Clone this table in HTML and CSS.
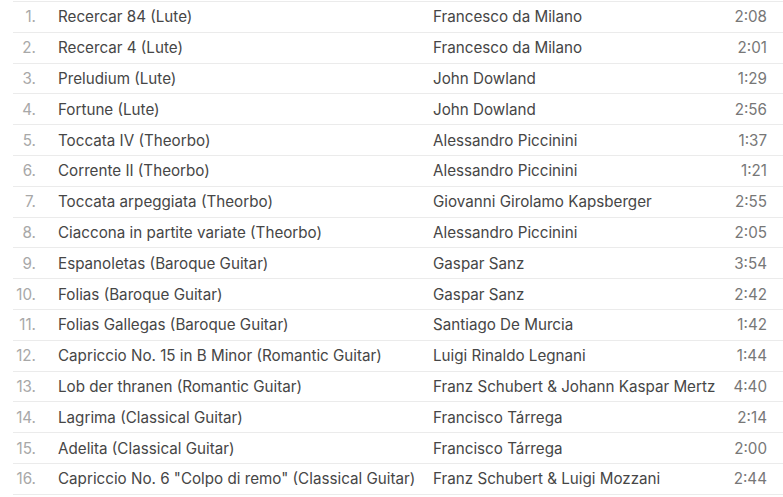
FILE: index.html
```html
<!DOCTYPE html>
<html>
<head>
<meta charset="utf-8">
<link rel="stylesheet" href="styles.css">
</head>
<body>
<ol class="tracks">
<li class="row"><span class="num">1.</span><span class="title">Recercar 84 (Lute)</span><span class="artist">Francesco da Milano</span><span class="time">2:08</span></li>
<li class="row"><span class="num">2.</span><span class="title">Recercar 4 (Lute)</span><span class="artist">Francesco da Milano</span><span class="time">2:01</span></li>
<li class="row"><span class="num">3.</span><span class="title">Preludium (Lute)</span><span class="artist">John Dowland</span><span class="time">1:29</span></li>
<li class="row"><span class="num">4.</span><span class="title">Fortune (Lute)</span><span class="artist">John Dowland</span><span class="time">2:56</span></li>
<li class="row"><span class="num">5.</span><span class="title">Toccata IV (Theorbo)</span><span class="artist">Alessandro Piccinini</span><span class="time">1:37</span></li>
<li class="row"><span class="num">6.</span><span class="title">Corrente II (Theorbo)</span><span class="artist">Alessandro Piccinini</span><span class="time">1:21</span></li>
<li class="row"><span class="num">7.</span><span class="title">Toccata arpeggiata (Theorbo)</span><span class="artist">Giovanni Girolamo Kapsberger</span><span class="time">2:55</span></li>
<li class="row"><span class="num">8.</span><span class="title">Ciaccona in partite variate (Theorbo)</span><span class="artist">Alessandro Piccinini</span><span class="time">2:05</span></li>
<li class="row"><span class="num">9.</span><span class="title">Espanoletas (Baroque Guitar)</span><span class="artist">Gaspar Sanz</span><span class="time">3:54</span></li>
<li class="row"><span class="num">10.</span><span class="title">Folias (Baroque Guitar)</span><span class="artist">Gaspar Sanz</span><span class="time">2:42</span></li>
<li class="row"><span class="num">11.</span><span class="title">Folias Gallegas (Baroque Guitar)</span><span class="artist">Santiago De Murcia</span><span class="time">1:42</span></li>
<li class="row"><span class="num">12.</span><span class="title">Capriccio No. 15 in B Minor (Romantic Guitar)</span><span class="artist">Luigi Rinaldo Legnani</span><span class="time">1:44</span></li>
<li class="row"><span class="num">13.</span><span class="title">Lob der thranen (Romantic Guitar)</span><span class="artist">Franz Schubert &amp; Johann Kaspar Mertz</span><span class="time">4:40</span></li>
<li class="row"><span class="num">14.</span><span class="title">Lagrima (Classical Guitar)</span><span class="artist">Francisco Tárrega</span><span class="time">2:14</span></li>
<li class="row"><span class="num">15.</span><span class="title">Adelita (Classical Guitar)</span><span class="artist">Francisco Tárrega</span><span class="time">2:00</span></li>
<li class="row"><span class="num">16.</span><span class="title">Capriccio No. 6 "Colpo di remo" (Classical Guitar)</span><span class="artist">Franz Schubert &amp; Luigi Mozzani</span><span class="time">2:44</span></li>
</ol>
</body>
</html>
```
FILE: styles.css
```css
html, body {
  margin: 0;
  padding: 0;
  background: #ffffff;
}
body {
  font-family: Inter, "Liberation Sans", sans-serif;
  font-size: 15.2px;
  color: #464646;
}
.tracks {
  list-style: none;
  margin: 1px 0 0 13px;
  padding: 0;
  border-top: 1px solid #ebebeb;
}
.row {
  display: flex;
  align-items: center;
  height: 29.8px;
  border-bottom: 1px solid #ebebeb;
  white-space: nowrap;
}
.num {
  width: 23px;
  text-align: right;
  color: #a8a8a8;
}
.title {
  margin-left: 22px;
  width: 375px;
}
.artist {
  flex: 1;
}
.time {
  padding-right: 16px;
  color: #777777;
}
```
